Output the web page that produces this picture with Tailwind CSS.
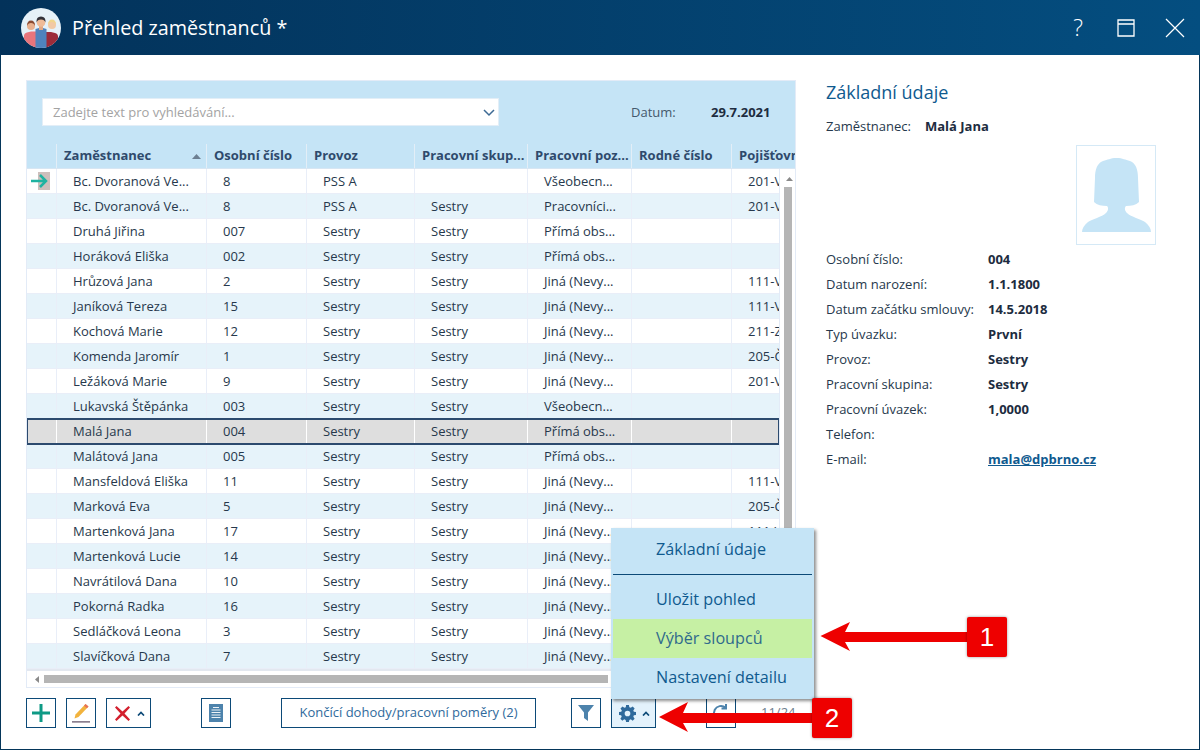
<!DOCTYPE html>
<html lang="cs">
<head>
  <meta charset="UTF-8" />
  <title>Přehled zaměstnanců</title>
  <script src="https://cdn.jsdelivr.net/npm/@tailwindcss/browser@4"></script>
</head>
<body class="w-[1200px] h-[750px] overflow-hidden relative bg-white font-['Open_Sans',sans-serif] text-[13px] text-[#26384c]">

  <!-- Window -->
  <div class="h-[750px] flex flex-col border-x border-b border-[#04365a]">

    <!-- Title bar -->
    <div class="h-[55px] -mx-px shrink-0 flex items-center bg-linear-to-r from-[#03325a] to-[#044e80] text-white">
      <svg class="ml-[21px] w-10 h-10" viewBox="0 0 40 40">
        <defs><clipPath id="logo"><circle cx="20" cy="20" r="20"/></clipPath></defs>
        <g clip-path="url(#logo)">
          <rect width="40" height="40" fill="#e6f1f8"/>
          <path d="M3 40V28q0-3 3-3.500l4-1h5V40z" fill="#e8757c"/>
          <path d="M25 40V24h5l4 1q3 .5 3 3.500V40z" fill="#9c2b39"/>
          <circle cx="10" cy="18" r="4" fill="#e9b08e"/>
          <path d="M6 18q0-5.500 4-5.500t4 5.500q-1-3-4-3t-4 3z" fill="#8a4a32"/>
          <circle cx="31" cy="17" r="4" fill="#f2c9a5"/>
          <path d="M27 17q0-5.500 4-5.500t4 5.500q-1-3-4-3t-4 3z" fill="#f0d58c"/>
          <path d="M14.500 40V21l3.500-1h4l3.500 1v19z" fill="#4f83bd"/>
          <rect x="18" y="18" width="4" height="4" fill="#e2a985"/>
          <circle cx="20" cy="14.500" r="4.300" fill="#efbb98"/>
          <path d="M15.500 14.500q-.5-6 4.500-6t4.500 6q-1-3-4.500-3t-4.500 3z" fill="#33323a"/>
        </g>
      </svg>
      <div class="ml-[11px] text-[19.75px] leading-none">Přehled zaměstnanců *</div>
      <div class="ml-auto w-[22px] text-center text-[23px] font-light leading-none mr-[28px]">?</div>
      <svg class="w-[18px] h-[18px] mr-[30px]" viewBox="0 0 18 18" fill="none" stroke="#fff" stroke-width="1.300">
        <path d="M1 1h16v16H1zM1 5h16"/>
      </svg>
      <svg class="w-5 h-5 mr-[15px]" viewBox="0 0 20 20" fill="none" stroke="#fff" stroke-width="1.200">
        <path d="M1 1l18 18M19 1L1 19"/>
      </svg>
    </div>

    <div class="flex-1 flex min-h-0">

      <!-- Left: grid + toolbar -->
      <div class="w-[795px] shrink-0 pl-[25px] pt-[25px] flex flex-col">
        <div class="h-[608px] w-[770px] border border-[#e3ebf7] flex flex-col">

          <div class="h-[63px] shrink-0 bg-[#c5e4f6] flex items-center pl-[15px]">
            <div class="w-[457px] h-[28px] -mt-[1px] bg-white border border-[#e3eef7] flex items-center pl-[10px] pt-px text-[#a3a3a3]">
              Zadejte text pro vyhledávání...
              <svg class="ml-auto mr-[3px] w-[12px] h-[8px]" viewBox="0 0 12 8" fill="none" stroke="#3d6a94" stroke-width="1.500"><path d="M1 1l5 5 5-5"/></svg>
            </div>
            <div class="ml-[132px] w-[80px] text-[#44586c]">Datum:</div>
            <div class="font-bold text-[#1d2c40]">29.7.2021</div>
          </div>

          <!-- Column headers -->
          <div class="h-[25px] shrink-0 bg-[#c5e4f6] flex font-bold text-[#2f4a6c] whitespace-nowrap overflow-hidden border-b border-[#d7e6f3]">
            <div class="w-[30px] shrink-0 border-r border-[#e3eef7]"></div>
            <div class="w-[150px] shrink-0 border-r border-[#e3eef7] pl-[7px] flex items-center">Zaměstnanec
              <svg class="ml-auto mr-[5px] w-[9px] h-[5px]" viewBox="0 0 9 5"><path d="M0 5L4.500 0 9 5z" fill="#6c7f92"/></svg>
            </div>
            <div class="w-[100px] shrink-0 border-r border-[#e3eef7] pl-[7px] flex items-center">Osobní číslo</div>
            <div class="w-[108px] shrink-0 border-r border-[#e3eef7] pl-[7px] flex items-center">Provoz</div>
            <div class="w-[113px] shrink-0 border-r border-[#e3eef7] pl-[7px] flex items-center">Pracovní skup...</div>
            <div class="w-[104px] shrink-0 border-r border-[#e3eef7] pl-[7px] flex items-center">Pracovní poz...</div>
            <div class="w-[100px] shrink-0 border-r border-[#e3eef7] pl-[7px] flex items-center">Rodné číslo</div>
            <div class="flex-1 pl-[7px] flex items-center">Pojišťovna</div>
          </div>

          <!-- Rows + vertical scrollbar -->
          <div class="flex h-[500px] shrink-0">
            <div id="rows" class="w-[752px] shrink-0 overflow-hidden"></div>
            <div class="flex-1 bg-white border-l border-[#e3ebf7] relative">
              <svg class="absolute left-[6px] top-[8px] w-[7px] h-[4px]" viewBox="0 0 7 4"><path d="M0 4l3.500-4L7 4z" fill="#8a8a8a"/></svg>
              <div class="absolute left-[4px] top-[18px] w-[8px] h-[360px] bg-[#b5b5b5]"></div>
            </div>
          </div>

          <!-- Horizontal scrollbar -->
          <div class="flex-1 border-t-2 border-[#e3e8f0] flex items-center pl-[8px]">
            <svg class="w-[4px] h-[7px]" viewBox="0 0 4 7"><path d="M4 0L0 3.500 4 7z" fill="#8a8a8a"/></svg>
            <div class="ml-[5px] w-[564px] h-[8px] bg-[#b5b5b5]"></div>
          </div>
        </div>

        <!-- Toolbar -->
        <div class="mt-[10px] h-[30px] flex text-[#0f5a8f]">
          <div class="w-[30px] h-[30px] border border-[#0c4a78] flex items-center justify-center">
            <svg class="w-[18px] h-[18px]" viewBox="0 0 18 18"><path d="M7.500 0h3v7.500H18v3h-7.500V18h-3v-7.500H0v-3h7.500z" fill="#0e9a85"/></svg>
          </div>
          <div class="ml-[10px] w-[30px] h-[30px] border border-[#0c4a78] flex items-center justify-center">
            <svg class="w-[20px] h-[20px]" viewBox="0 0 20 20"><path d="M14.500 1l3 2.500-10 10.500-4 1.500 1-4z" fill="#f2b33d"/><path d="M14.500 1l3 2.500-1.500 1.700-3-2.500z" fill="#e8705a"/><rect x="1" y="18" width="18" height="1.700" fill="#8b7f8f"/></svg>
          </div>
          <div class="ml-[10px] w-[45px] h-[30px] border border-[#0c4a78] flex items-center pl-[8px]">
            <svg class="w-[15px] h-[15px]" viewBox="0 0 15 15"><path d="M1.500 0L7.500 5.500 13.500 0 15 1.500 9.500 7.500 15 13.500 13.500 15 7.500 9.500 1.500 15 0 13.500 5.500 7.500 0 1.500z" fill="#d3202e"/></svg>
            <svg class="ml-[7px] w-[8px] h-[5px]" viewBox="0 0 8 5" fill="none" stroke="#0c4a78" stroke-width="1.700"><path d="M1 4.500l3-3 3 3"/></svg>
          </div>
          <div class="ml-[50px] w-[30px] h-[30px] border border-[#0c4a78] flex items-center justify-center">
            <svg class="w-[14px] h-[18px]" viewBox="0 0 14 18"><rect width="14" height="18" fill="#4d83ac"/><path d="M4 3.500h6M2.500 6h9M2.500 8.500h9M2.500 11h9M2.500 13.500h9" stroke="#fff" stroke-width=".9"/></svg>
          </div>
          <div class="ml-[50px] w-[255px] h-[30px] border border-[#0c4a78] flex items-center justify-center text-[#2f6a9c]">Končící dohody/pracovní poměry (2)</div>
          <div class="ml-[35px] w-[30px] h-[30px] border border-[#0c4a78] flex items-center justify-center">
            <svg class="w-[16px] h-[16px]" viewBox="0 0 16 16"><path d="M0 0h16L10 7.500V16L6 13V7.500z" fill="#4d83ac"/></svg>
          </div>
          <div class="ml-[10px] w-[45px] h-[30px] border border-[#0c4a78] bg-[#e3f2fc] flex items-center pl-[7px]">
            <svg class="w-[17px] h-[17px]" viewBox="0 0 24 24"><path fill="#2f6a9c" fill-rule="evenodd" d="M10 0h4l.6 3.200 2 .8L19.300 2.200l2.800 2.800L20.200 7.700l.8 2 3 .3v4l-3 .6-.8 2 1.900 2.700-2.800 2.800-2.700-1.900-2 .8-.6 3h-4l-.6-3-2-.8-2.700 1.900-2.800-2.800 1.900-2.700-.8-2L0 14v-4l3.200-.3.800-2L2.100 5l2.800-2.800L7.600 4l2-.8zM12 8a4 4 0 100 8 4 4 0 000-8z"/></svg>
            <svg class="ml-[6px] w-[8px] h-[5px]" viewBox="0 0 8 5" fill="none" stroke="#0c4a78" stroke-width="1.700"><path d="M1 4.500l3-3 3 3"/></svg>
          </div>
          <div class="ml-[50px] w-[30px] h-[30px] border border-[#0c4a78] flex items-center justify-center">
            <svg class="w-[18px] h-[18px]" viewBox="0 0 18 18" fill="none" stroke="#4d83ac" stroke-width="2"><path d="M16 9a7 7 0 11-2.500-5.400M14 0v4.500H9.500"/></svg>
          </div>
          <div class="ml-[25px] self-center text-[#6f7f8f]">11/24</div>
        </div>
      </div>

      <!-- Right: detail -->
      <div class="flex-1 pl-[30px] pt-[25px] relative">
        <div class="text-[18px] leading-[24px] text-[#0f5a8f]">Základní údaje</div>
        <div class="mt-[13px] h-[20px] flex items-center"><div class="w-[99px]">Zaměstnanec:</div><div class="font-bold text-[#1d2c40]">Malá Jana</div></div>
        <div class="mt-[8px] ml-[250px] w-[80px] h-[100px] border border-[#d5e9f6] flex justify-center pt-[12px]">
          <svg class="w-[69px] h-[74px]" viewBox="0 0 69 74">
            <path d="M34.500 0C28 0 26 2 21 3C15 5 13 12 13 20L12 44C15 47 20 48 25 48C27 50 26 53 24 55C20 59 10 61 6 64C2 67 0 71 0 74H69C69 71 67 67 63 64C59 61 49 59 45 55C43 53 42 50 44 48C49 48 54 47 57 44L56 20C56 12 54 5 48 3C43 2 41 0 34.500 0z" fill="#c5e4f6"/>
          </svg>
        </div>
        <div id="detail" class="mt-[2px]"></div>
      </div>
    </div>
  </div>

  <!-- Popup menu -->
  <div class="absolute left-[611px] top-[528px] w-[203px] h-[171px] bg-[#c5e4f6] shadow-[2px_2px_3px_rgba(0,0,0,0.45)] px-[2px] text-[16.2px] text-[#0f5a8f]">
    <div class="h-[46px] pl-[43px] pb-[4px] flex items-center">Základní údaje</div>
    <div class="h-px bg-[#0c4a78]"></div>
    <div class="h-[44px] pl-[43px] flex items-center pt-[4px]">Uložit pohled</div>
    <div class="h-[39px] pl-[43px] pb-[1px] flex items-center bg-[#c6f0a4] text-[#2f6a8c]">Výběr sloupců</div>
    <div class="h-[39px] pl-[43px] pb-[1px] flex items-center">Nastavení detailu</div>
  </div>

  <!-- Callout arrows -->
  <svg class="absolute left-[655px] top-[615px] w-[320px] h-[125px]" viewBox="0 0 320 125">
    <path d="M165.500 21L195 7l-5 10 122 0v10l-122 0 5 9z" fill="#ee0000"/>
    <path d="M4 102l29-15-5 11h135v10H28l5 9z" fill="#ee0000"/>
  </svg>
  <div class="absolute left-[967px] top-[617px] w-10 h-10 rounded-[2px] bg-[#ee0000] shadow-[0_0_3px_rgba(0,0,0,0.4)] text-white text-[26px] flex items-center justify-center font-['Liberation_Sans',sans-serif]">1</div>
  <div class="absolute left-[812px] top-[698px] w-10 h-10 rounded-[2px] bg-[#ee0000] shadow-[0_0_3px_rgba(0,0,0,0.4)] text-white text-[26px] flex items-center justify-center font-['Liberation_Sans',sans-serif]">2</div>

  <script>
    const J = 'Jiná (Nevy...', P = 'Přímá obs...', V = 'Všeobecn...';
    const data = [
      ['Bc. Dvoranová Ve...', '8', 'PSS A', '', V, '201-VZP'],
      ['Bc. Dvoranová Ve...', '8', 'PSS A', 'Sestry', 'Pracovníci...', '201-VZP'],
      ['Druhá Jiřina', '007', 'Sestry', 'Sestry', P, ''],
      ['Horáková Eliška', '002', 'Sestry', 'Sestry', P, ''],
      ['Hrůzová Jana', '2', 'Sestry', 'Sestry', J, '111-VZP'],
      ['Janíková Tereza', '15', 'Sestry', 'Sestry', J, '111-VZP'],
      ['Kochová Marie', '12', 'Sestry', 'Sestry', J, '211-ZP'],
      ['Komenda Jaromír', '1', 'Sestry', 'Sestry', J, '205-ČPZP'],
      ['Ležáková Marie', '9', 'Sestry', 'Sestry', J, '201-VoZP'],
      ['Lukavská Štěpánka', '003', 'Sestry', 'Sestry', V, ''],
      ['Malá Jana', '004', 'Sestry', 'Sestry', P, ''],
      ['Malátová Jana', '005', 'Sestry', 'Sestry', P, ''],
      ['Mansfeldová Eliška', '11', 'Sestry', 'Sestry', J, '111-VZP'],
      ['Marková Eva', '5', 'Sestry', 'Sestry', J, '205-ČPZP'],
      ['Martenková Jana', '17', 'Sestry', 'Sestry', J, '111-VZP'],
      ['Martenková Lucie', '14', 'Sestry', 'Sestry', J, ''],
      ['Navrátilová Dana', '10', 'Sestry', 'Sestry', J, ''],
      ['Pokorná Radka', '16', 'Sestry', 'Sestry', J, ''],
      ['Sedláčková Leona', '3', 'Sestry', 'Sestry', J, ''],
      ['Slavíčková Dana', '7', 'Sestry', 'Sestry', J, ''],
    ];
    const arrow = `<div class="relative w-full h-full"><div class="absolute left-[11px] top-[3px] w-[12px] h-[18px] bg-[#cdbfbc]"></div><svg class="absolute left-[4px] top-[5px] w-[17px] h-[14px]" viewBox="0 0 17 14" fill="none" stroke="#1fb3a1" stroke-width="2.500"><path d="M0 7h15M9 1l6 6-6 6"/></svg></div>`;

    document.getElementById('rows').innerHTML = data.map((r, i) => {
      const sel = i === 10;
      const bg = sel ? 'bg-[#dedede] outline-2 -outline-offset-1 outline-[#2c4a6e] border-white relative'
                     : (i % 2 ? 'bg-[#e6f3fa] border-[#e9eef8]' : 'bg-white border-[#e9eef8]');
      const line = sel ? 'border-white' : 'border-[#e9eef8]';
      return `<div class="h-[25px] flex whitespace-nowrap items-center border-b ${bg}">
        <div class="w-[30px] h-full shrink-0 border-r ${line}">${i === 0 ? arrow : ''}</div>
        <div class="w-[150px] h-full shrink-0 border-r ${line} pl-[16px] pt-[2px] flex items-center">${r[0]}</div>
        <div class="w-[100px] h-full shrink-0 border-r ${line} pl-[16px] pt-[2px] flex items-center">${r[1]}</div>
        <div class="w-[108px] h-full shrink-0 border-r ${line} pl-[16px] pt-[2px] flex items-center">${r[2]}</div>
        <div class="w-[113px] h-full shrink-0 border-r ${line} pl-[16px] pt-[2px] flex items-center">${r[3]}</div>
        <div class="w-[104px] h-full shrink-0 border-r ${line} pl-[16px] pt-[2px] flex items-center">${r[4]}</div>
        <div class="w-[100px] h-full shrink-0 border-r ${line}"></div>
        <div class="w-[47px] h-full shrink-0 pl-[16px] pt-[2px] flex items-center overflow-hidden">${r[5]}</div>
      </div>`;
    }).join('');

    const detail = [
      ['Osobní číslo:', '004'], ['Datum narození:', '1.1.1800'], ['Datum začátku smlouvy:', '14.5.2018'],
      ['Typ úvazku:', 'První'], ['Provoz:', 'Sestry'], ['Pracovní skupina:', 'Sestry'],
      ['Pracovní úvazek:', '1,0000'], ['Telefon:', ''],
    ];
    document.getElementById('detail').innerHTML = detail.map(d =>
      `<div class="h-[25px] flex items-center"><div class="w-[162px]">${d[0]}</div><div class="font-bold text-[#1d2c40]">${d[1]}</div></div>`
    ).join('') + `<div class="h-[25px] flex items-center"><div class="w-[162px]">E-mail:</div><div class="font-bold underline text-[#0f5a8f]">mala@dpbrno.cz</div></div>`;
  </script>
</body>
</html>
